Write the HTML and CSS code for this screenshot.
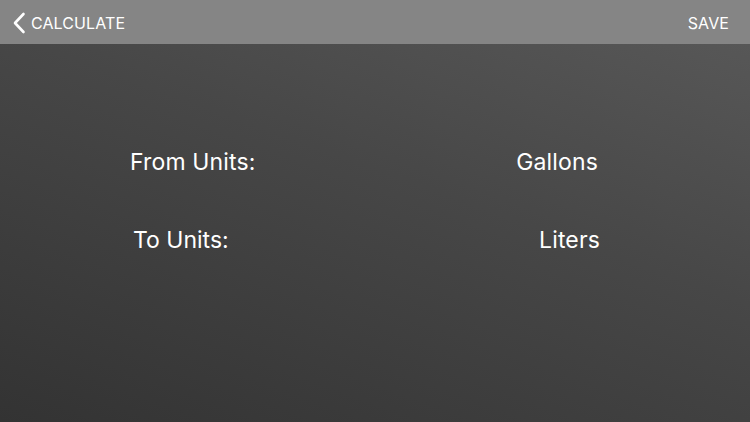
FILE: index.html
```html
<!DOCTYPE html>
<html>
<head>
<meta charset="utf-8">
<link rel="stylesheet" href="styles.css">
</head>
<body>
<div class="screen">
  <header class="navbar">
    <div class="nav-back">
      <svg class="chevron" width="14" height="22" viewBox="0 0 14 22"><path d="M11.5 2 L3 11 L11.5 20" fill="none" stroke="#fff" stroke-width="2.6" stroke-linecap="round" stroke-linejoin="round"/></svg>
      <span>CALCULATE</span>
    </div>
    <div class="nav-save">SAVE</div>
  </header>
  <main class="content">
    <div class="rows">
      <div class="label">From Units:</div>
      <div class="value">Gallons</div>
      <div class="label label-to">To Units:</div>
      <div class="value value-to">Liters</div>
    </div>
  </main>
</div>
</body>
</html>
```
FILE: styles.css
```css
html, body {
  margin: 0;
  padding: 0;
  width: 750px;
  height: 422px;
  overflow: hidden;
}
body {
  font-family: Inter, "Liberation Sans", sans-serif;
  color: #fff;
}
.screen {
  display: flex;
  flex-direction: column;
  height: 422px;
}
.navbar {
  height: 44px;
  flex: none;
  background: #858585;
  display: flex;
  align-items: center;
  justify-content: space-between;
  padding: 1px 21px 0 12px;
  font-size: 16px;
  letter-spacing: 0.1px;
  box-sizing: border-box;
}
.nav-back {
  display: flex;
  align-items: center;
  gap: 5px;
}
.chevron {
  display: block;
}
.content {
  flex: 1;
  background: linear-gradient(200deg, #575757 0%, #474747 40%, #333 100%);
  padding: 105px 150px 0 130px;
}
.rows {
  display: grid;
  grid-template-columns: 1fr auto;
  row-gap: 52px;
  font-size: 23px;
  line-height: 26px;
  letter-spacing: 0.15px;
}
.value {
  text-align: right;
  padding-right: 2px;
}
.label-to {
  padding-left: 3px;
  letter-spacing: 0;
}
.value-to {
  padding-right: 0;
}
```
